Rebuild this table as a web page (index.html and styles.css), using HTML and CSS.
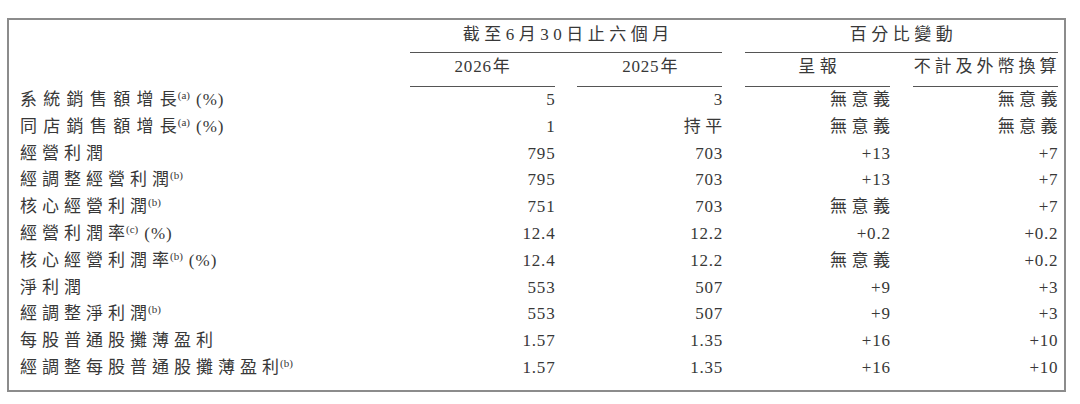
FILE: index.html
```html
<!DOCTYPE html>
<html lang="zh-Hant">
<head>
<meta charset="utf-8">
<title>業績摘要</title>
<link rel="stylesheet" href="styles.css">
</head>
<body>
<div class="panel">
  <div class="grid">
    <div class="h1 g12"><span class="cj">截至6月30日止六個月</span></div>
    <div class="h1 g34"><span class="cj">百分比變動</span></div>

    <div class="h2 c2"><span class="num">2026</span>年</div>
    <div class="h2"><span class="num">2025</span>年</div>
    <div class="h2"><span class="cj">呈報</span></div>
    <div class="h2"><span class="cj tight">不計及外幣換算</span></div>

    <div class="lab"><span class="ls wide">系統銷售額增</span>長<sup class="n">(a)</sup><span class="pc">(%)</span></div>
    <div class="val"><span class="num">5</span></div>
    <div class="val"><span class="num">3</span></div>
    <div class="val"><span class="cj">無意義</span></div>
    <div class="val"><span class="cj">無意義</span></div>

    <div class="lab"><span class="ls wide">同店銷售額增</span>長<sup class="n">(a)</sup><span class="pc">(%)</span></div>
    <div class="val"><span class="num">1</span></div>
    <div class="val"><span class="cj">持平</span></div>
    <div class="val"><span class="cj">無意義</span></div>
    <div class="val"><span class="cj">無意義</span></div>

    <div class="lab"><span class="ls">經營利潤</span></div>
    <div class="val"><span class="num">795</span></div>
    <div class="val"><span class="num">703</span></div>
    <div class="val"><span class="num">+13</span></div>
    <div class="val"><span class="num">+7</span></div>

    <div class="lab"><span class="ls">經調整經營利</span>潤<sup class="n">(b)</sup></div>
    <div class="val"><span class="num">795</span></div>
    <div class="val"><span class="num">703</span></div>
    <div class="val"><span class="num">+13</span></div>
    <div class="val"><span class="num">+7</span></div>

    <div class="lab"><span class="ls">核心經營利</span>潤<sup class="n">(b)</sup></div>
    <div class="val"><span class="num">751</span></div>
    <div class="val"><span class="num">703</span></div>
    <div class="val"><span class="cj">無意義</span></div>
    <div class="val"><span class="num">+7</span></div>

    <div class="lab"><span class="ls">經營利潤</span>率<sup class="n">(c)</sup><span class="pc">(%)</span></div>
    <div class="val"><span class="num">12.4</span></div>
    <div class="val"><span class="num">12.2</span></div>
    <div class="val"><span class="num">+0.2</span></div>
    <div class="val"><span class="num">+0.2</span></div>

    <div class="lab"><span class="ls">核心經營利潤</span>率<sup class="n">(b)</sup><span class="pc">(%)</span></div>
    <div class="val"><span class="num">12.4</span></div>
    <div class="val"><span class="num">12.2</span></div>
    <div class="val"><span class="cj">無意義</span></div>
    <div class="val"><span class="num">+0.2</span></div>

    <div class="lab"><span class="ls">淨利潤</span></div>
    <div class="val"><span class="num">553</span></div>
    <div class="val"><span class="num">507</span></div>
    <div class="val"><span class="num">+9</span></div>
    <div class="val"><span class="num">+3</span></div>

    <div class="lab"><span class="ls">經調整淨利</span>潤<sup class="n">(b)</sup></div>
    <div class="val"><span class="num">553</span></div>
    <div class="val"><span class="num">507</span></div>
    <div class="val"><span class="num">+9</span></div>
    <div class="val"><span class="num">+3</span></div>

    <div class="lab"><span class="ls">每股普通股攤薄盈利</span></div>
    <div class="val"><span class="num">1.57</span></div>
    <div class="val"><span class="num">1.35</span></div>
    <div class="val"><span class="num">+16</span></div>
    <div class="val"><span class="num">+10</span></div>

    <div class="lab"><span class="ls">經調整每股普通股攤薄盈</span>利<sup class="n">(b)</sup></div>
    <div class="val"><span class="num">1.57</span></div>
    <div class="val"><span class="num">1.35</span></div>
    <div class="val"><span class="num">+16</span></div>
    <div class="val"><span class="num">+10</span></div>
  </div>
</div>
</body>
</html>
```
FILE: styles.css
```css
html, body {
  margin: 0;
  padding: 0;
  background: #ffffff;
}

body {
  font-family: "Liberation Serif", "Noto Sans CJK TC", serif;
  font-size: 17px;
  color: #383838;
}

.panel {
  margin: 18px 0 0 7px;
  width: 1059px;
  box-sizing: border-box;
  border: 2px solid #8c8c8c;
  padding: 0 6px 8px 11px;
}

.grid {
  display: grid;
  grid-template-columns: 367px 145px 145px 145px 145px;
  grid-template-rows: 33px 34px;
  grid-auto-rows: 26.8px;
  column-gap: 22.67px;
  line-height: 26.8px;
}

.h1,
.h2 {
  text-align: center;
  white-space: nowrap;
  line-height: 26px;
  border-bottom: 1px solid #555555;
  box-sizing: border-box;
}

.h1 { padding: 2px 0 4px; }
.h2 { padding: 1px 0 6px; }

.g12 { grid-column: 2 / span 2; }
.g34 { grid-column: 4 / span 2; }
.c2 { grid-column-start: 2; }

.lab {
  grid-column-start: 1;
  white-space: nowrap;
}

.val {
  text-align: right;
  white-space: nowrap;
}

.cj {
  letter-spacing: 4.5px;
  margin-right: -4.5px;
}

.cj.tight {
  letter-spacing: 4px;
  margin-right: -4px;
}

.ls {
  letter-spacing: 5px;
}

.ls.wide {
  letter-spacing: 6.3px;
}

.num {
  letter-spacing: 0.8px;
  margin-right: -0.8px;
}

.h2 .num {
  margin-right: 1px;
}

.n {
  font-size: 11px;
  line-height: 0;
  vertical-align: 6px;
  letter-spacing: 0;
  margin-left: 1px;
}

.pc {
  margin-left: 6px;
  letter-spacing: 1px;
}
```
